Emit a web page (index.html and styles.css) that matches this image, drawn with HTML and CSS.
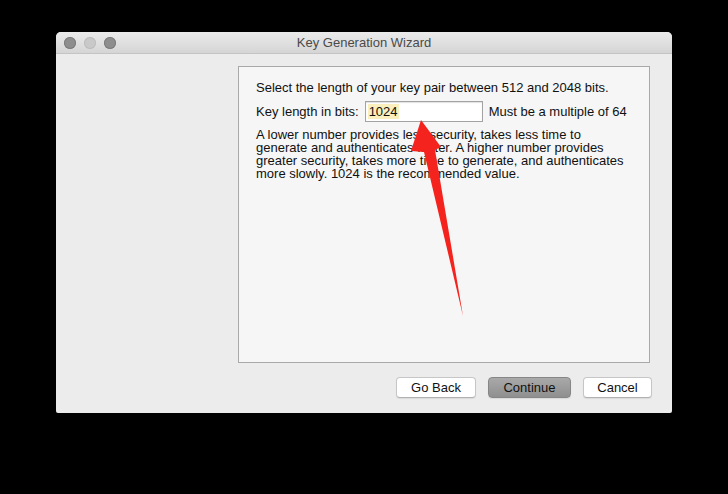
FILE: index.html
```html
<!DOCTYPE html>
<html lang="en">
<head>
  <meta charset="UTF-8">
  <meta name="viewport" content="width=device-width, initial-scale=1.0">
  <title>Key Generation Wizard</title>
  <link rel="stylesheet" href="styles.css">
</head>
<body>
  <div class="window">
    <div class="titlebar">
      <div class="lights">
        <span class="light"></span>
        <span class="light faded"></span>
        <span class="light"></span>
      </div>
      <div class="title">Key Generation Wizard</div>
    </div>

    <div class="content">
      <div class="sidebar"></div>
      <div class="main">
        <div class="panel">
          <p class="intro">Select the length of your key pair between 512 and 2048 bits.</p>
          <div class="field-row">
            <span>Key length in bits:</span>
            <div class="textbox"><span class="selected">1024</span></div>
            <span>Must be a multiple of 64</span>
          </div>
          <p class="help">A lower number provides less security, takes less time to<br>
            generate and authenticates faster. A higher number provides<br>
            greater security, takes more time to generate, and authenticates<br>
            more slowly. 1024 is the recommended value.</p>
        </div>
        <div class="buttons">
          <button class="btn">Go Back</button>
          <button class="btn primary">Continue</button>
          <button class="btn">Cancel</button>
        </div>
      </div>
    </div>
  </div>

  <!-- annotation arrow drawn over the dialog -->
  <svg class="arrow" width="728" height="494" viewBox="0 0 728 494">
    <polygon points="421,120 441,147 435,150 463,316 424,152 411,151" fill="#f5231d"/>
  </svg>
</body>
</html>
```

FILE: styles.css
```css
body {
  margin: 0;
  padding: 32px 0 0 56px;
  background-color: #000;
  font-family: "Liberation Sans", Arial, sans-serif;
  font-size: 13px;
  color: #111;
  height: 494px;
  box-sizing: border-box;
  overflow: hidden;
}

.window {
  width: 616px;
  height: 381px;
  background-color: #ececec;
  border-radius: 5px 5px 2px 2px;
  overflow: hidden;
  display: flex;
  flex-direction: column;
}

.titlebar {
  height: 22px;
  flex: none;
  display: flex;
  align-items: center;
  position: relative;
  background: linear-gradient(#ebebeb, #d5d5d5);
  border-bottom: 1px solid #c4c4c4;
  box-sizing: border-box;
}

.lights {
  display: flex;
  gap: 8px;
  padding-left: 8px;
}

.light {
  width: 12px;
  height: 12px;
  border-radius: 50%;
  background-color: #8e8e8e;
  box-shadow: inset 0 0 0 1px #7c7c7c;
}

.light.faded {
  background-color: #c9c9c9;
  box-shadow: inset 0 0 0 1px #bdbdbd;
}

.title {
  position: absolute;
  left: 0;
  right: 0;
  text-align: center;
  color: #4a4a4a;
}

.content {
  flex: 1;
  display: flex;
}

.sidebar {
  width: 182px;
  flex: none;
}

.main {
  flex: 1;
  display: flex;
  flex-direction: column;
  padding: 12px 0 0 0;
}

.panel {
  width: 412px;
  height: 297px;
  box-sizing: border-box;
  background-color: #f6f6f6;
  border: 1px solid #a9a9a9;
  padding: 13px 10px 0 17px;
}

.intro {
  margin: 0;
  line-height: 16px;
}

.field-row {
  display: flex;
  align-items: center;
  gap: 6px;
  margin-top: 5px;
}

.textbox {
  width: 118px;
  height: 21px;
  box-sizing: border-box;
  background-color: #fff;
  border: 1px solid #a3a3a3;
  box-shadow: inset 0 1px 1px rgba(0, 0, 0, 0.12);
  padding: 2px 0 0 2px;
  line-height: 16px;
}

.selected {
  background-color: #fbefbd;
  padding: 0 1px;
}

.help {
  margin: 6px 0 0 0;
  line-height: 13px;
}

.buttons {
  display: flex;
  justify-content: flex-end;
  gap: 12px;
  padding: 14px 20px 0 0;
}

.btn {
  font-family: "Liberation Sans", Arial, sans-serif;
  font-size: 13px;
  color: #111;
  height: 21px;
  padding: 0;
  width: 80px;
  background-color: #fff;
  border: 1px solid #c6c6c6;
  border-bottom-color: #b2b2b2;
  border-radius: 4px;
  box-shadow: 0 1px 1px rgba(0, 0, 0, 0.08);
}

.btn.primary {
  width: 83px;
  background: linear-gradient(#a9a9a9, #8f8f8f);
  border-color: #868686;
}

.btn:last-child {
  width: 69px;
}

.arrow {
  position: absolute;
  top: 0;
  left: 0;
  pointer-events: none;
}
```
